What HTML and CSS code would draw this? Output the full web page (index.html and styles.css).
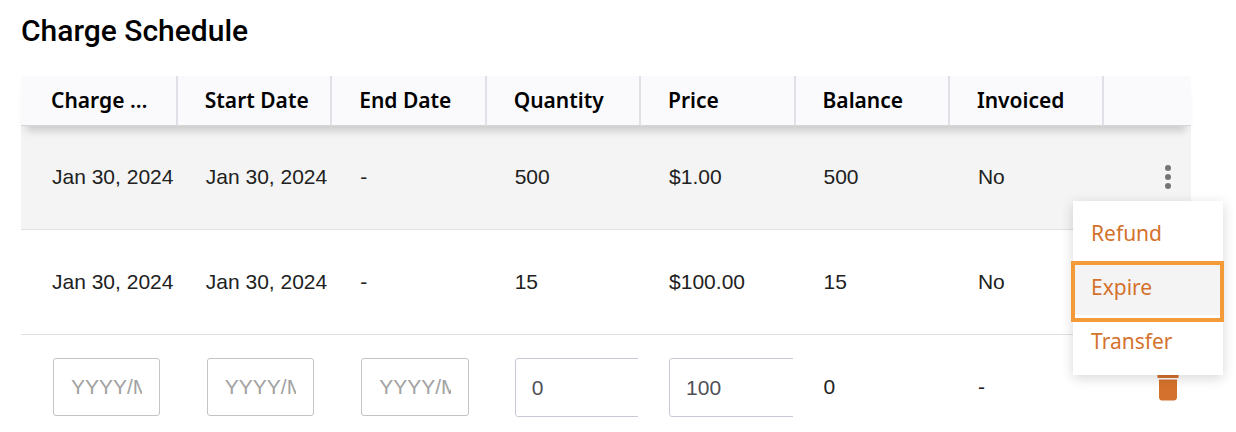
FILE: index.html
```html
<!doctype html>
<html lang="en">

<head>
  <meta charset="utf-8">
  <title>Charge Schedule</title>
  <link rel="stylesheet" href="styles.css">
</head>

<body>
  <h2 class="title">Charge Schedule</h2>

  <table class="schedule">
    <colgroup>
      <col class="col-first">
      <col class="col" span="6">
      <col>
    </colgroup>
    <thead>
      <tr>
        <th>Charge Date</th>
        <th>Start Date</th>
        <th>End Date</th>
        <th>Quantity</th>
        <th>Price</th>
        <th>Balance</th>
        <th>Invoiced</th>
        <th></th>
      </tr>
    </thead>
    <tbody>
      <tr class="active">
        <td>Jan 30, 2024</td>
        <td>Jan 30, 2024</td>
        <td>-</td>
        <td>500</td>
        <td>$1.00</td>
        <td>500</td>
        <td>No</td>
        <td class="actions">
          <button class="icon-btn" type="button" aria-label="More actions">
            <svg viewBox="0 0 24 24">
              <circle cx="12" cy="6" r="2" />
              <circle cx="12" cy="12" r="2" />
              <circle cx="12" cy="18" r="2" />
            </svg>
          </button>
          <div class="menu">
            <button class="menu-item" type="button">Refund</button>
            <button class="menu-item selected" type="button">Expire</button>
            <button class="menu-item" type="button">Transfer</button>
          </div>
        </td>
      </tr>
      <tr>
        <td>Jan 30, 2024</td>
        <td>Jan 30, 2024</td>
        <td>-</td>
        <td>15</td>
        <td>$100.00</td>
        <td>15</td>
        <td>No</td>
        <td class="actions"></td>
      </tr>
      <tr class="edit-row">
        <td class="field"><input class="date" type="text" placeholder="YYYY/MM/DD" aria-label="Charge Date"></td>
        <td class="field"><input class="date" type="text" placeholder="YYYY/MM/DD" aria-label="Start Date"></td>
        <td class="field"><input class="date" type="text" placeholder="YYYY/MM/DD" aria-label="End Date"></td>
        <td class="field"><div class="clip"><input class="number" type="text" value="0" aria-label="Quantity"></div></td>
        <td class="field"><div class="clip"><input class="number" type="text" value="100" aria-label="Price"></div></td>
        <td>0</td>
        <td>-</td>
        <td class="actions">
          <button class="icon-btn delete" type="button" aria-label="Delete">
            <svg viewBox="0 0 24 24">
              <path d="M6 19c0 1.1.9 2 2 2h8c1.1 0 2-.9 2-2V7H6v12zM19 4h-3.5l-1-1h-5l-1 1H5v2h14V4z" />
            </svg>
          </button>
        </td>
      </tr>
    </tbody>
  </table>
</body>

</html>
```

FILE: styles.css
```css
* {
  box-sizing: border-box;
}

body {
  margin: 0;
  padding: 11px 45px 0 21px;
  background-color: #fff;
  color: #212121;
  font-family: "Liberation Sans", Arial, sans-serif;
  font-size: 21px;
}

.title {
  margin: 0 0 25px;
  color: #000;
  font-family: Roboto, sans-serif;
  font-size: 30px;
  font-weight: 500;
  line-height: 40px;
}

/* table */
.schedule {
  width: 100%;
  table-layout: fixed;
  border-collapse: separate;
  border-spacing: 0;
}

.col-first {
  width: 13.4%;
}

.col {
  width: 13.2%;
}

thead {
  position: relative;
  z-index: 1;
  box-shadow: 0 10px 8px -5px rgba(0, 0, 0, 0.17);
}

th {
  height: 50px;
  padding: 0 16px 2px 27px;
  overflow: hidden;
  border-right: 2px solid #e0e0e8;
  border-bottom: 1px solid #d6d6d8;
  background-color: #fafafd;
  color: #000;
  font-family: "Noto Sans", sans-serif;
  font-size: 21px;
  font-weight: 600;
  text-align: left;
  text-overflow: ellipsis;
  white-space: nowrap;
}

th:first-child {
  padding-right: 26px;
  padding-left: 30px;
  border-top-left-radius: 4px;
}

th:last-child {
  border-right: 0;
  border-top-right-radius: 4px;
}

td {
  height: 105px;
  padding: 0 0 0 28px;
  border-bottom: 1px solid #e0e0e0;
  white-space: nowrap;
}

td:first-child {
  padding-left: 31px;
}

.active td {
  height: 104px;
  padding-bottom: 2px;
  background-color: #f4f4f4;
}

.edit-row td {
  height: 82px;
  padding-top: 23px;
  padding-bottom: 2px;
  border-bottom: 0;
}

.edit-row .field {
  padding-bottom: 0;
  vertical-align: top;
}

/* fields */
input {
  display: block;
  height: 58px;
  margin-left: 1px;
  border: 1px solid #c4c4c4;
  border-radius: 3px;
  background-color: #fff;
  font-family: inherit;
  font-size: 21px;
}

.date {
  width: calc(100% - 19px);
  padding: 0 17px;
}

.date::placeholder {
  color: #a2a2a2;
}

.clip {
  margin-right: 3px;
  overflow: hidden;
}

.number {
  width: 160px;
  height: 59px;
  margin-left: 0;
  padding: 0 16px;
  border-color: #c9c9d6;
  color: #505056;
}

/* row actions */
td.actions {
  position: relative;
  padding-right: 5px;
  text-align: right;
}

.icon-btn {
  width: 36px;
  height: 36px;
  padding: 0;
  border: 0;
  background: none;
  color: #757575;
  vertical-align: middle;
}

.icon-btn svg {
  display: block;
  fill: currentColor;
}

.delete {
  color: #d4722d;
}

.menu {
  position: absolute;
  z-index: 2;
  top: 75px;
  right: -32px;
  width: 150px;
  padding: 6px 0;
  background-color: #fff;
  box-shadow: 0 3px 12px rgba(0, 0, 0, 0.16);
}

.menu-item {
  display: block;
  position: relative;
  width: 100%;
  height: 54px;
  padding: 0 18px 2px;
  border: 0;
  background-color: transparent;
  color: #d4722d;
  font-family: "Noto Sans", sans-serif;
  font-size: 21px;
  text-align: left;
}

.selected {
  z-index: 1;
  background-color: #f4f4f4;
}

.selected::after {
  content: "";
  position: absolute;
  top: 0;
  right: -1px;
  bottom: -7px;
  left: -2px;
  border: 4px solid #f39a39;
}
```
